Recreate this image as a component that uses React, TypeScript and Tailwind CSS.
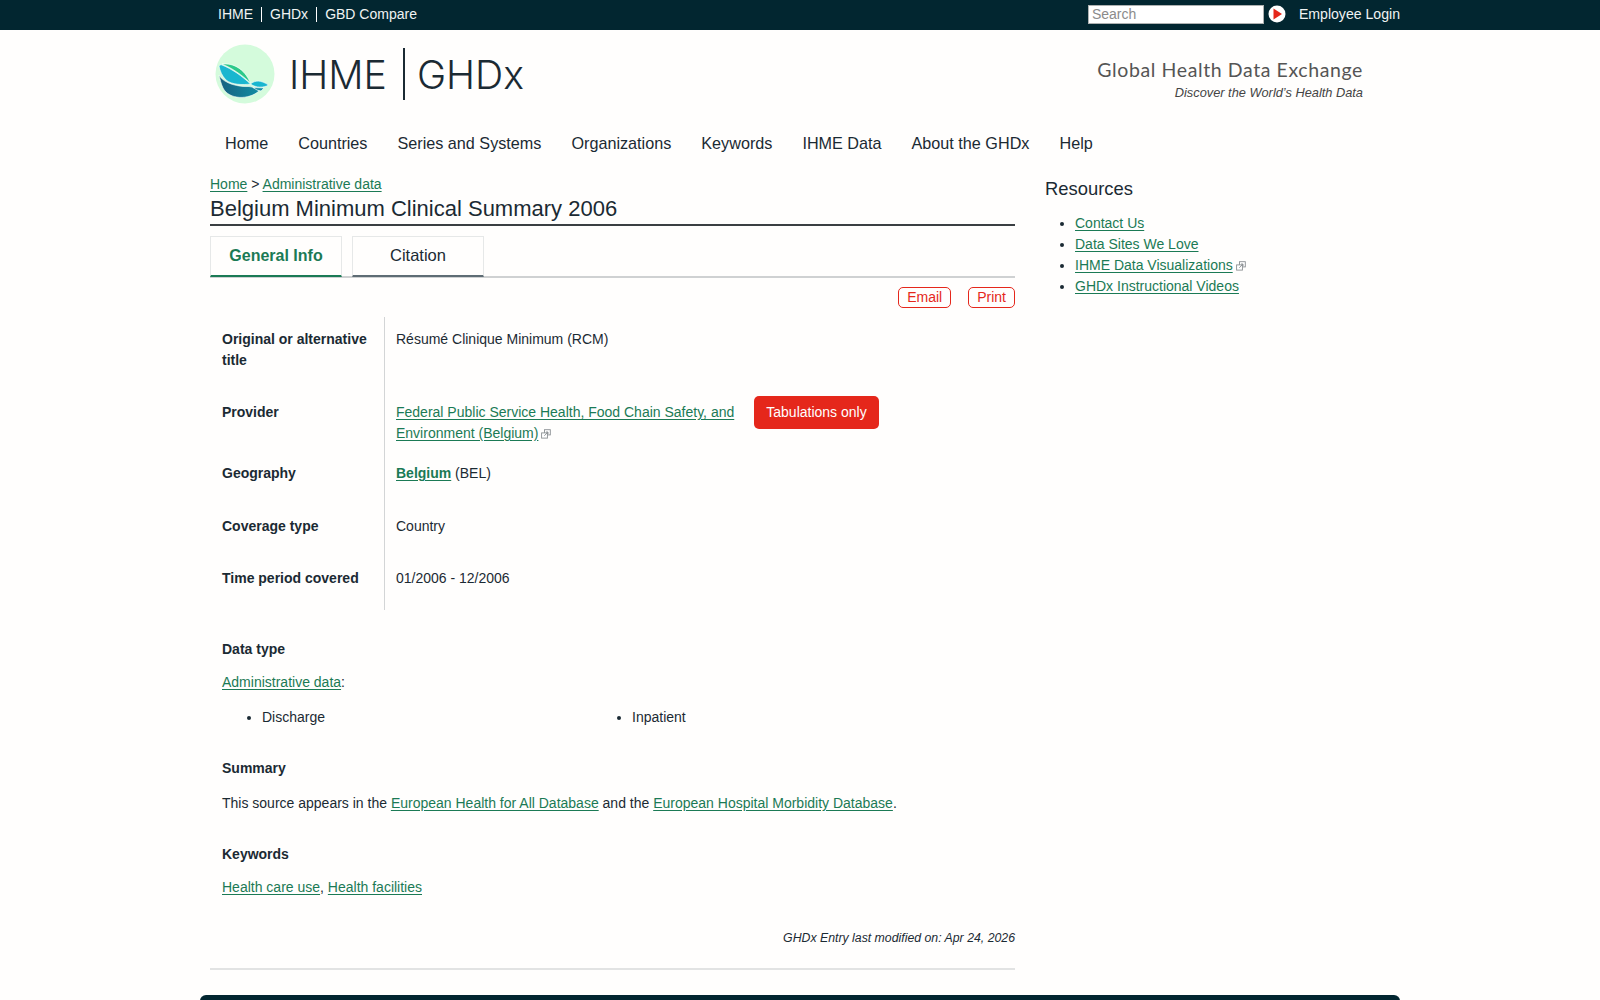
import React from "react";

const Ext = () => (
  <svg viewBox="0 0 10 10" className="inline-block w-[10px] h-[10px] ml-[3px] align-[-1px]" fill="none" stroke="#8a8f92" strokeWidth="0.9">
    <rect x="3.5" y="0.7" width="5.8" height="5.2" fill="#fff" />
    <rect x="0.6" y="3.9" width="5.8" height="5.2" fill="#fff" />
    <path d="M3.3 6.8 L6.8 3.2 M5 3 H7 V5" />
  </svg>
);

const L = ({ children, bold }: { children: React.ReactNode; bold?: boolean }) => (
  <a href="#" className={"text-[#1b7a55] underline underline-offset-[2px] " + (bold ? "font-bold" : "")}>{children}</a>
);

const Logo = () => (
  <svg viewBox="0 0 60 60" className="w-[60px] h-[60px] shrink-0">
    <defs>
      <linearGradient id="bowl" x1="0" y1="0" x2="1" y2="0">
        <stop offset="0" stopColor="#17607f" />
        <stop offset="1" stopColor="#128da3" />
      </linearGradient>
    </defs>
    <circle cx="30" cy="30" r="29.5" fill="#d4fbdc" />
    <g stroke="#ffffff" strokeWidth="0.6" strokeLinejoin="round">
      <path d="M7 20 C18 19 29 24 35.5 39 C27 31 17 24 7 20 Z" fill="#2cc98a" />
      <path d="M4 22 C5 21 6 20.5 7 21 C17 25 27 32 35.5 40 C28 41 17 41 11 36 C7 32 5 27 4 22 Z" fill="#19b6cf" />
      <path d="M4 31 C9 40 24 43 34 42.5 C38 43 41 44.5 44 47 C34 56 14 56 8 44 C6 40 5 35 4 31 Z" fill="url(#bowl)" />
      <path d="M35.5 40 C40 36 46 36 53.5 41 C49 44 41 44 35.5 40 Z" fill="#19b6cf" />
      <path d="M38 43.5 L49 44 L46 47 L42 46 Z" fill="#128da3" />
    </g>
  </svg>
);

const Row = ({ label, h, pt, children }: { label: React.ReactNode; h: string; pt: string; children: React.ReactNode }) => (
  <div className={"flex " + h}>
    <div className={"w-[175px] pl-3 pr-2 font-bold border-r border-[#d3d5d6] " + pt}>{label}</div>
    <div className={"flex-1 pl-[11px] " + pt}>{children}</div>
  </div>
);

const sans = "font-['Liberation_Sans',Arial,sans-serif]";

export default function App() {
  return (
    <div className={"h-[1000px] overflow-hidden bg-[#fffefd] text-[#1b2a33] text-[14px] leading-[21px] " + sans}>
      <div className="h-[30px] bg-[#022630] text-[#f0f3f3]">
        <div className="w-[1200px] mx-auto flex items-center h-full pb-[2px]">
          <div className="flex items-center pl-[18px]">
            <a className="pr-[8px] border-r border-white leading-[15px]">IHME</a>
            <a className="px-[8px] border-r border-white leading-[15px]">GHDx</a>
            <a className="pl-[8px] leading-[15px]">GBD Compare</a>
          </div>
          <div className="ml-auto flex items-center">
            <div className="w-[176px] h-[19px] bg-white border border-[#aeb1b1] text-[#8b8b8b] pl-[3px] leading-[16px]">Search</div>
            <svg viewBox="0 0 18 18" className="w-[18px] h-[18px] ml-[4px]">
              <circle cx="9" cy="9" r="8.5" fill="#fff" />
              <path d="M5.5 3.5 L14 9 L5.5 14.5 Z" fill="#e5271b" />
            </svg>
            <a className="ml-[13px] text-[14.1px]">Employee Login</a>
          </div>
        </div>
      </div>

      <div className="w-[1200px] mx-auto">
        <div className="flex items-center h-[88px] pl-[15px] pr-[37px]">
          <Logo />
          <div className="flex items-center font-['Inter',sans-serif] font-light text-[39.2px] text-[#1b2a33] ml-[14px]">
            <span>IHME</span>
            <span className="w-[2px] h-[52px] bg-[#1b2a33] ml-[16.5px] mr-[11.5px]" />
            <span>GHDx</span>
          </div>
          <div className="ml-auto text-right self-start pt-[27px]">
            <div className="font-['Lato',sans-serif] text-[19.5px] leading-[26px] tracking-[0.6px] text-[#555]">Global Health Data Exchange</div>
            <div className="italic text-[12.8px] leading-[19px] text-[#444]">Discover the World’s Health Data</div>
          </div>
        </div>

        <div className="flex pl-[10px] h-[45px] items-center text-[16.2px] mt-[3px]">
          {["Home", "Countries", "Series and Systems", "Organizations", "Keywords", "IHME Data", "About the GHDx", "Help"].map((n) => (
            <a key={n} className="px-[15px]">{n}</a>
          ))}
        </div>

        <div className="flex pl-[10px] pt-[8px]">
          <div className="w-[805px]">
            <div className="h-[21px]"><L>Home</L> &gt; <L>Administrative data</L></div>
            <h1 className="text-[22px] leading-[28px] pb-[1px] border-b-2 border-[#3a3f42]">Belgium Minimum Clinical Summary 2006</h1>
            <div className="flex gap-[10px] pt-[10px] border-b-2 border-[#cfd1d2] h-[52px] text-[16px]">
              <div className="w-[132px] h-[41px] pb-[2px] flex items-center justify-center border border-[#e6e8e8] border-b-2 border-b-[#1b7a55] font-bold text-[#1b7a55]">General Info</div>
              <div className="w-[132px] h-[41px] pb-[2px] flex items-center justify-center border border-[#e6e8e8] border-b-2 border-b-[#5e6c74] text-[16.5px]">Citation</div>
            </div>
            <div className="flex justify-end gap-[17px] pt-[9px] h-[39px] text-[#e5271b]">
              <a className="h-[21px] leading-[19px] px-[8px] border border-[#e5271b] rounded-[5px]">Email</a>
              <a className="h-[21px] leading-[19px] px-[8px] border border-[#e5271b] rounded-[5px]">Print</a>
            </div>

            <div>
              <Row label={<>Original or alternative<br />title</>} h="h-[73px]" pt="pt-[12px]">Résumé Clinique Minimum (RCM)</Row>
              <Row label="Provider" h="h-[61px]" pt="pt-[12px]">
                <div className="flex items-start">
                  <div className="w-[345px]"><L>Federal Public Service Health, Food Chain Safety, and Environment (Belgium)</L><Ext /></div>
                  <span className="ml-[13px] -mt-[6px] bg-[#e5271b] text-white rounded-[5px] w-[125px] h-[33px] flex items-center justify-center">Tabulations only</span>
                </div>
              </Row>
              <Row label="Geography" h="h-[53px]" pt="pt-[12px]"><L bold>Belgium</L> (BEL)</Row>
              <Row label="Coverage type" h="h-[52px]" pt="pt-[12px]">Country</Row>
              <Row label="Time period covered" h="h-[54px]" pt="pt-[12px]">01/2006 - 12/2006</Row>
            </div>

            <div className="pl-3 pt-[29px]">
              <div className="font-bold">Data type</div>
              <div className="mt-[12px]"><L>Administrative data</L>:</div>
              <ul className="mt-[14px] grid grid-cols-[370px_1fr] list-disc pl-[40px]">
                <li>Discharge</li>
                <li>Inpatient</li>
              </ul>
              <div className="font-bold mt-[30px]">Summary</div>
              <div className="mt-[14px]">This source appears in the <L>European Health for All Database</L> and the <L>European Hospital Morbidity Database</L>.</div>
              <div className="font-bold mt-[30px]">Keywords</div>
              <div className="mt-[12px]"><L>Health care use</L>, <L>Health facilities</L></div>
            </div>
            <div className="text-right italic text-[12.3px] mt-[30px]">GHDx Entry last modified on: Apr 24, 2026</div>
            <div className="border-b-2 border-[#e2e3e3] mt-[19px]" />
          </div>

          <div className="ml-[30px] w-[345px]">
            <h2 className="text-[18.4px] leading-[24px] mt-[3px]">Resources</h2>
            <ul className="list-disc pl-[30px] mt-[12px]">
              <li><L>Contact Us</L></li>
              <li><L>Data Sites We Love</L></li>
              <li><L>IHME Data Visualizations</L><Ext /></li>
              <li><L>GHDx Instructional Videos</L></li>
            </ul>
          </div>
        </div>

        <div className="h-[40px] mt-[25px] bg-[#022630] rounded-t-[6px]" />
      </div>
    </div>
  );
}
